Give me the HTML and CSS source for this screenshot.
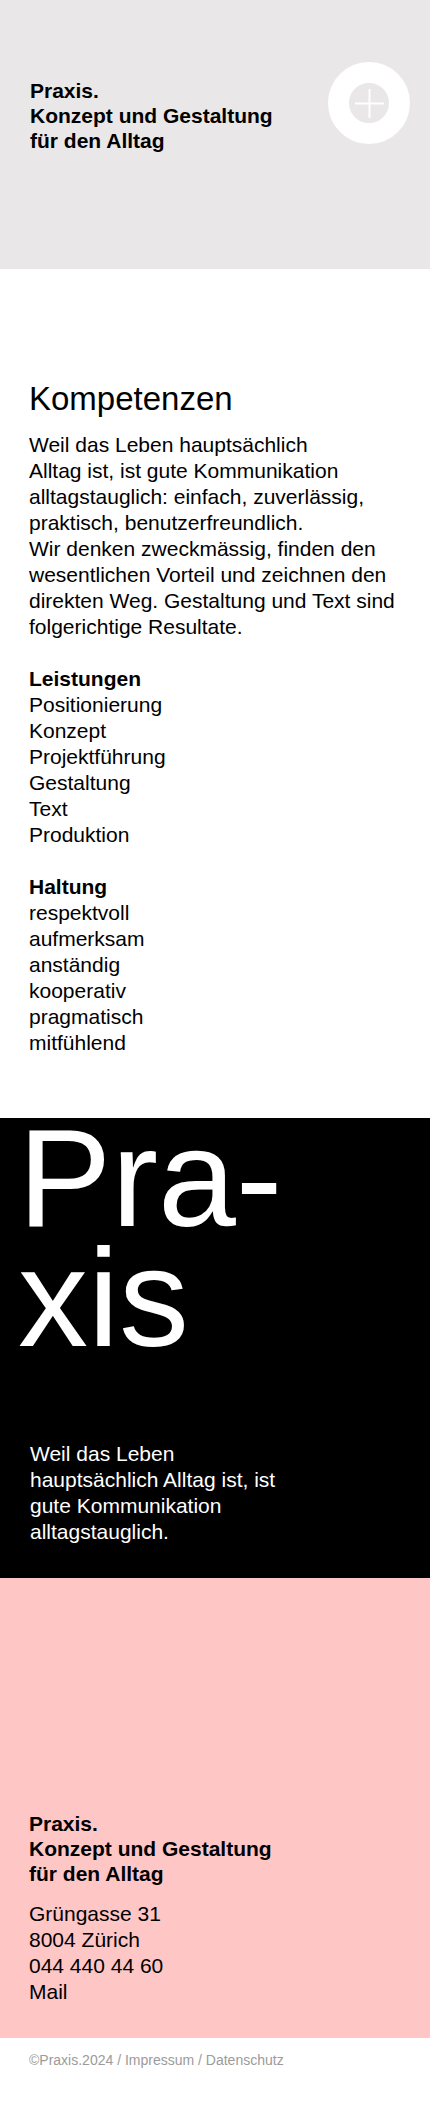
FILE: index.html
```html
<!DOCTYPE html>
<html lang="de">
<head>
<meta charset="utf-8">
<meta name="viewport" content="width=device-width, initial-scale=1">
<title>Praxis. Konzept und Gestaltung für den Alltag</title>
<link rel="stylesheet" href="styles.css">
</head>
<body>
<header class="header">
  <h1 class="claim header-claim">Praxis.<br>Konzept und Gestaltung<br>für den Alltag</h1>
  <button class="menu-button" type="button" aria-label="Menü öffnen">
    <svg class="menu-icon" viewBox="0 0 82 82" aria-hidden="true">
      <circle cx="41" cy="41" r="30.5" fill="none" stroke="#fff" stroke-width="21"/>
      <path d="M27 41.5H56M41.5 27V56" fill="none" stroke="#fff" stroke-width="2"/>
    </svg>
  </button>
</header>
<main>
  <section class="skills">
    <h2 class="skills-title">Kompetenzen</h2>
    <p>Weil das Leben hauptsächlich<br>Alltag ist, ist gute Kommunikation alltagstauglich: einfach, zuverlässig, praktisch, benutzerfreundlich.<br>Wir denken zweckmässig, finden den wesentlichen Vorteil und zeichnen den direkten Weg. Gestaltung und Text sind folgerichtige Resultate.</p>
    <div>
      <h3 class="list-title">Leistungen</h3>
      <ul class="list">
        <li>Positionierung</li>
        <li>Konzept</li>
        <li>Projektführung</li>
        <li>Gestaltung</li>
        <li>Text</li>
        <li>Produktion</li>
      </ul>
    </div>
    <div>
      <h3 class="list-title">Haltung</h3>
      <ul class="list">
        <li>respektvoll</li>
        <li>aufmerksam</li>
        <li>anständig</li>
        <li>kooperativ</li>
        <li>pragmatisch</li>
        <li>mitfühlend</li>
      </ul>
    </div>
  </section>
  <section class="poster">
    <h2 class="poster-title">Pra-<br>xis</h2>
    <p class="poster-text">Weil das Leben hauptsächlich Alltag ist, ist gute Kommunikation alltagstauglich.</p>
  </section>
  <section class="contact">
    <h2 class="claim">Praxis.<br>Konzept und Gestaltung<br>für den Alltag</h2>
    <address class="address">Grüngasse 31<br>8004 Zürich<br><a href="tel:+41444404460">044 440 44 60</a><br><a href="#mail">Mail</a></address>
  </section>
</main>
<footer class="footer">©Praxis.2024 / <a href="#impressum">Impressum</a> / <a href="#datenschutz">Datenschutz</a></footer>
</body>
</html>
```

FILE: styles.css
```css
* {
  box-sizing: border-box;
}

body {
  margin: 0;
  background: #fff;
  color: #000;
  font-family: "Liberation Sans", Helvetica, Arial, sans-serif;
  font-size: 21px;
  line-height: 26px;
}

h1, h2, h3, p, ul {
  margin: 0;
  padding: 0;
}

a {
  color: inherit;
  text-decoration: none;
}

.claim {
  font-size: 21px;
  font-weight: 700;
  line-height: 25px;
}

.header {
  display: flex;
  align-items: flex-start;
  justify-content: space-between;
  padding: 62px 20px 116px 30px;
  background: #e9e7e8;
}

.header-claim {
  padding-top: 16px;
}

.menu-button {
  flex: none;
  width: 82px;
  height: 82px;
  padding: 0;
  border: 0;
  border-radius: 50%;
  background: none;
  cursor: pointer;
}

.menu-icon {
  display: block;
  width: 100%;
}

.skills {
  display: grid;
  gap: 26px;
  padding: 110px 29px 62px;
}

.skills-title {
  margin-bottom: -13px;
  font-size: 33px;
  font-weight: 400;
  line-height: 40px;
}

.list-title {
  font-size: 21px;
  font-weight: 700;
}

.list {
  list-style: none;
}

.poster {
  padding-bottom: 33px;
  background: #000;
  color: #fff;
}

.poster-title {
  padding-left: 18px;
  font-size: 140px;
  font-weight: 400;
  line-height: 120px;
}

.poster-text {
  max-width: 290px;
  margin-top: 83px;
  padding-left: 30px;
}

.contact {
  padding: 233px 29px 33px;
  background: #ffc6c6;
}

.address {
  margin-top: 15px;
  font-style: normal;
}

.footer {
  padding: 12px 29px 34px;
  color: #9b9b9b;
  font-size: 14px;
  line-height: 20px;
}
```
